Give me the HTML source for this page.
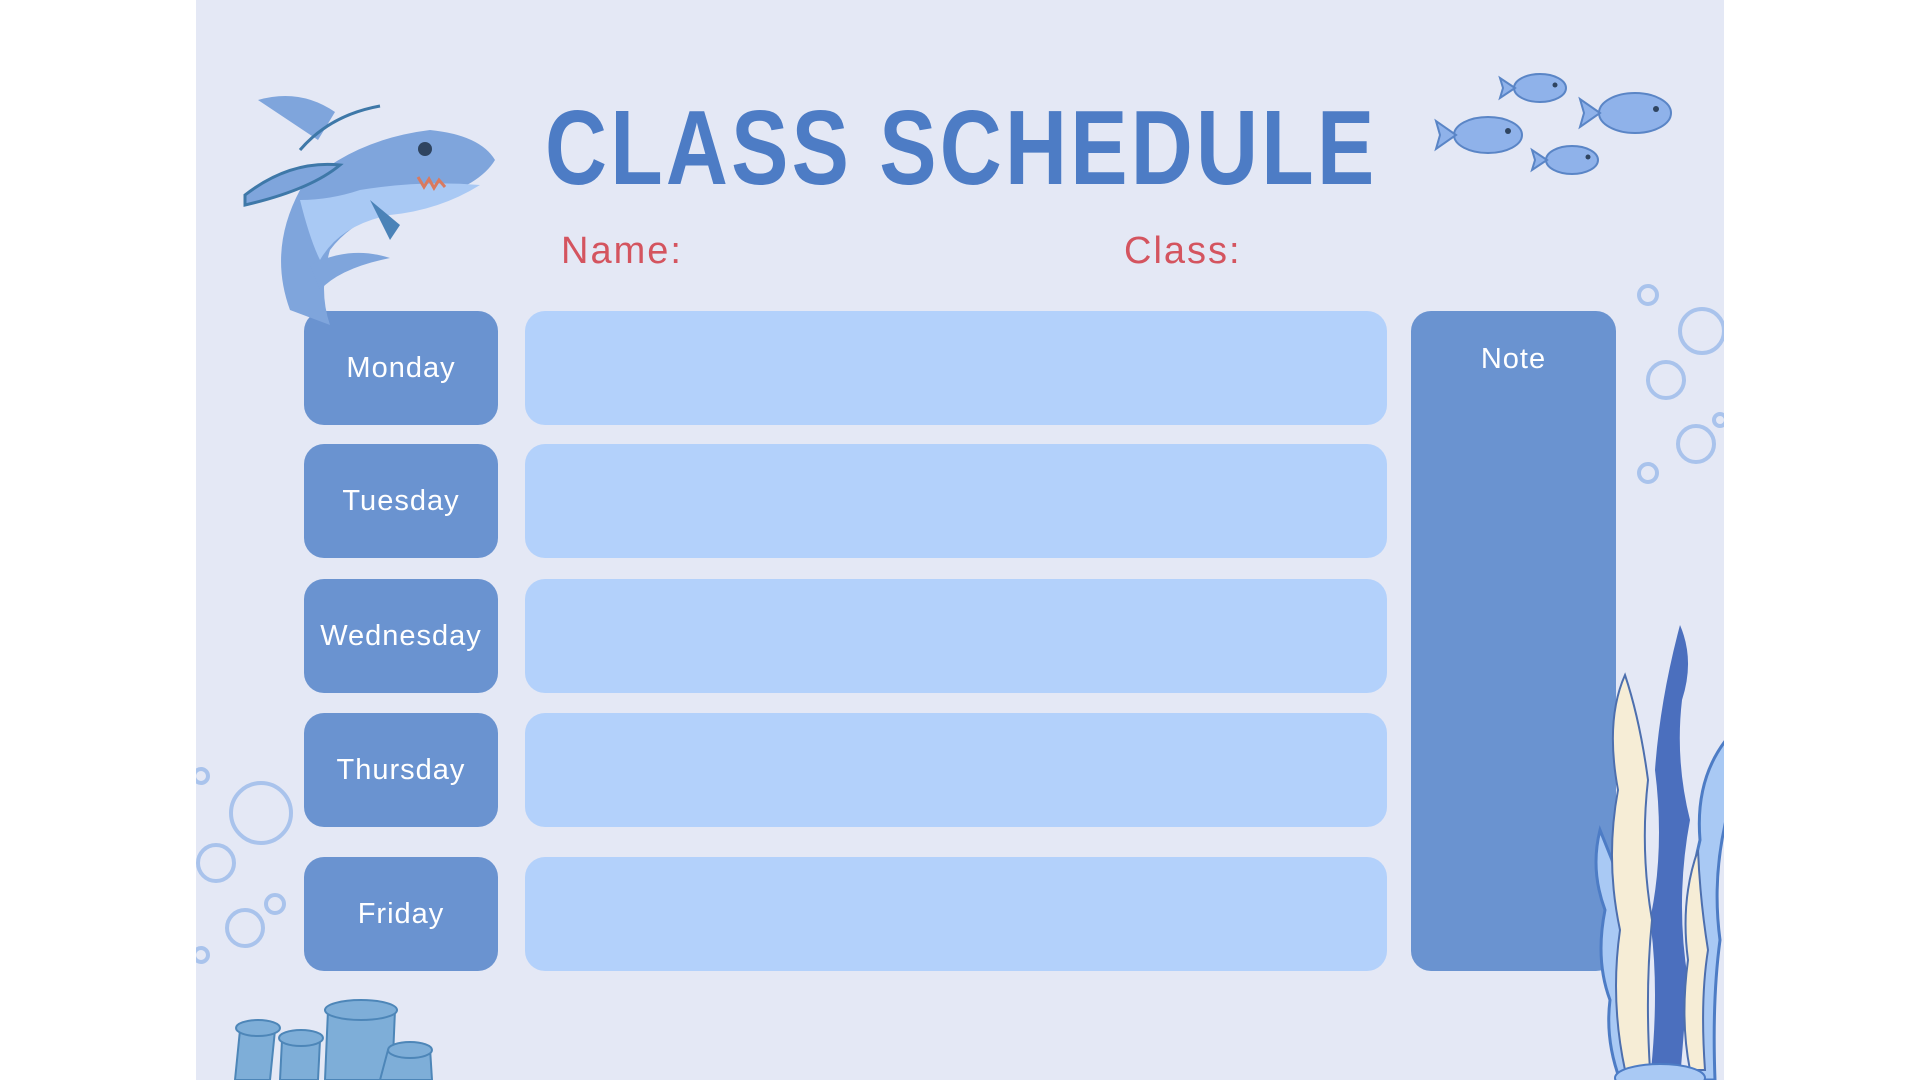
<!DOCTYPE html>
<html><head><meta charset="utf-8"><style>
body{margin:0;background:#fff;width:1920px;height:1080px;overflow:hidden;position:relative;font-family:"Liberation Sans",sans-serif}
#pg{position:absolute;left:196px;top:0;width:1528px;height:1080px;background:#e4e8f5;overflow:hidden}
.d{position:absolute;left:304px;width:194px;height:114px;background:#6a93d0;border-radius:20px;color:#fff;font-size:29px;display:flex;align-items:center;justify-content:center;letter-spacing:1px}
.l{position:absolute;left:525px;width:862px;height:114px;background:#b3d1fb;border-radius:20px}
.t{position:absolute;left:545px;top:88px;font-size:106px;font-weight:bold;color:#4d7cc5;letter-spacing:4px;white-space:nowrap;transform:scaleX(0.81);transform-origin:left}
.n{position:absolute;top:230px;font-size:38px;color:#d4545f;letter-spacing:2px}
svg{position:absolute;left:0;top:0}
</style></head><body>
<div id="pg"></div>
<div class="t">CLASS SCHEDULE</div>
<div class="n" style="left:561px">Name:</div>
<div class="n" style="left:1124px">Class:</div>
<div class="d" style="top:311px">Monday</div>
<div class="d" style="top:444px">Tuesday</div>
<div class="d" style="top:579px">Wednesday</div>
<div class="d" style="top:713px">Thursday</div>
<div class="d" style="top:857px">Friday</div>
<div class="l" style="top:311px"></div>
<div class="l" style="top:444px"></div>
<div class="l" style="top:579px"></div>
<div class="l" style="top:713px"></div>
<div class="l" style="top:857px"></div>
<div style="position:absolute;left:1411px;top:311px;width:205px;height:660px;background:#6a93d0;border-radius:20px;color:#fff;font-size:29px;text-align:center;padding-top:32px;box-sizing:border-box;letter-spacing:1px">Note</div>
<svg width="1920" height="1080">
<defs><clipPath id="c"><rect x="196" y="0" width="1528" height="1080"/></clipPath></defs>
<g clip-path="url(#c)">
<g fill="none" stroke="#a9c3ec" stroke-width="4">
<circle cx="1648" cy="295" r="9"/><circle cx="1702" cy="331" r="22"/><circle cx="1666" cy="380" r="18"/><circle cx="1696" cy="444" r="18"/><circle cx="1648" cy="473" r="9"/><circle cx="1720" cy="420" r="6"/>
<circle cx="261" cy="813" r="30"/><circle cx="216" cy="863" r="18"/><circle cx="245" cy="928" r="18"/><circle cx="275" cy="904" r="9"/><circle cx="201" cy="776" r="7"/><circle cx="201" cy="955" r="7"/>
</g>
<g>
<path d="M258 100 Q300 88 335 112 L318 140 Z" fill="#7fa5dc"/>
<path d="M290 310 Q268 250 300 190 Q350 140 430 130 Q480 135 495 160 Q480 185 430 200 Q360 210 330 250 Q318 290 330 325 Z" fill="#7fa5dc"/>
<path d="M300 200 Q330 200 360 190 Q420 180 480 185 Q440 210 390 215 Q340 225 320 260 Q310 240 300 200Z" fill="#a9c9f4"/>
<path d="M245 195 Q290 160 340 165 Q310 190 245 205 Z" fill="#7fa5dc" stroke="#3e78a8" stroke-width="3"/>
<path d="M370 200 L400 225 L390 240 Z" fill="#4b83b8"/>
<path d="M310 265 Q350 245 390 258 Q340 268 320 290 Z" fill="#7fa5dc"/>
<path d="M300 150 Q330 115 380 106" fill="none" stroke="#3e78a8" stroke-width="3"/>
<circle cx="425" cy="149" r="7" fill="#2f4460"/>
<path d="M418 177 l6 10 l5 -8 l5 9 l5 -8 l6 7" fill="none" stroke="#d97a60" stroke-width="3"/>
</g>
<g fill="#8fb2ea" stroke="#5a85c6" stroke-width="2">
<ellipse cx="1488" cy="135" rx="34" ry="18"/><path d="M1456 135 l-20 -14 l4 14 l-4 14z"/>
<ellipse cx="1635" cy="113" rx="36" ry="20"/><path d="M1600 113 l-20 -14 l4 14 l-4 14z"/>
<ellipse cx="1540" cy="88" rx="26" ry="14"/><path d="M1515 88 l-15 -10 l3 10 l-3 10z"/>
<ellipse cx="1572" cy="160" rx="26" ry="14"/><path d="M1547 160 l-15 -10 l3 10 l-3 10z"/>
</g>
<g fill="#2f4460"><circle cx="1508" cy="131" r="3"/><circle cx="1656" cy="109" r="3"/><circle cx="1555" cy="85" r="2.5"/><circle cx="1588" cy="157" r="2.5"/></g>
<path d="M1600 830 Q1590 870 1605 910 Q1595 960 1610 1000 Q1605 1040 1620 1080 L1650 1080 Q1635 1020 1630 960 Q1625 900 1612 860 Z" fill="#a9c9f4" stroke="#4d7cc5" stroke-width="3"/>
<path d="M1726 740 Q1695 780 1700 840 Q1685 900 1695 960 Q1690 1020 1690 1080 L1715 1080 Q1712 1000 1720 940 Q1712 880 1726 820 Z" fill="#a9c9f4" stroke="#4d7cc5" stroke-width="3"/>
<path d="M1680 625 Q1695 660 1682 700 Q1675 760 1690 820 Q1675 900 1688 980 L1680 1080 L1650 1080 Q1660 990 1650 920 Q1665 850 1655 770 Q1660 700 1680 625Z" fill="#4b6fbe"/>
<path d="M1625 675 Q1605 720 1618 790 Q1605 860 1620 930 Q1610 1000 1625 1070 L1650 1070 Q1645 990 1652 920 Q1640 850 1648 780 Q1640 720 1625 675Z" fill="#f6edd6" stroke="#4d6fae" stroke-width="2"/>
<path d="M1698 850 Q1680 900 1688 960 Q1680 1020 1690 1070 L1705 1070 Q1700 1000 1708 950 Q1700 900 1698 850Z" fill="#f6edd6" stroke="#4d6fae" stroke-width="2"/>
<ellipse cx="1660" cy="1078" rx="45" ry="14" fill="#a9c9f4" stroke="#4d7cc5" stroke-width="2"/>
<g fill="#7eaed8" stroke="#4d86b8" stroke-width="2">
<path d="M235 1080 L240 1030 L275 1030 L270 1080Z"/><ellipse cx="258" cy="1028" rx="22" ry="8"/>
<path d="M280 1080 L282 1040 L320 1040 L318 1080Z"/><ellipse cx="301" cy="1038" rx="22" ry="8"/>
<path d="M325 1080 L328 1010 L395 1010 L392 1080Z"/><ellipse cx="361" cy="1010" rx="36" ry="10"/>
<path d="M380 1080 L388 1050 L430 1048 L432 1080Z"/><ellipse cx="410" cy="1050" rx="22" ry="8"/>
</g>
</g>
</svg>
</body></html>
